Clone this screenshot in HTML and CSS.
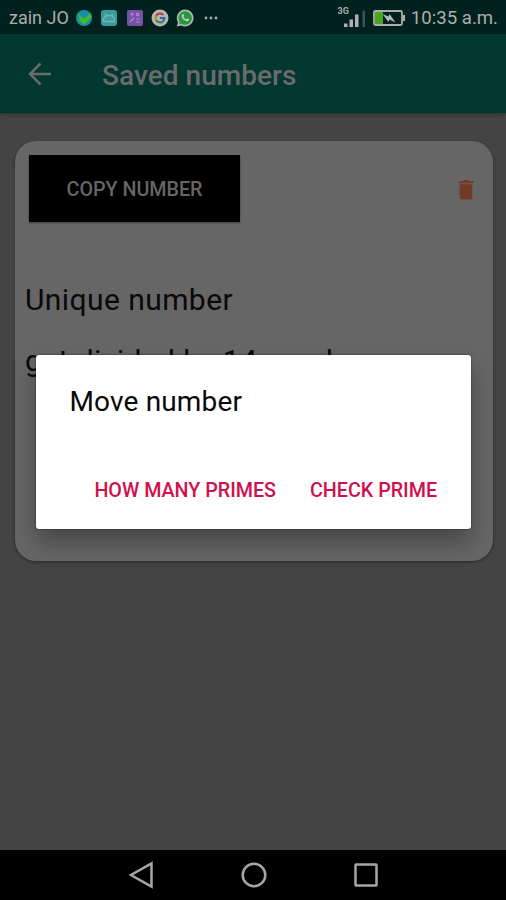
FILE: index.html
```
<!DOCTYPE html>
<html lang="en">
<head>
	<meta charset="UTF-8">
	<title>Saved numbers</title>
	<link rel="stylesheet" href="styles.css">
</head>
<body>

<div class="status-bar">
	<span class="carrier">zain JO</span>
	<div class="notifications">
		<svg width="18" height="18" viewBox="0 0 18 18">
			<circle cx="9" cy="9" r="8" fill="#168fa8"/>
			<path d="M2 4.500L7 8l2 1.500L16 4l.5 4-4.500 5-3.500 3-2.500-3.500L2 11l3-1z" fill="#43b82c"/>
		</svg>
		<svg width="18" height="18" viewBox="0 0 18 18">
			<rect x="1" y="1" width="16" height="16" rx="3" fill="#359c9e"/>
			<path d="M3.500 12.500V11a5.500 4.500 0 0 1 11 0v1.500zM5 5l2 2.500M13 5l-2 2.500" fill="none" stroke="#76b9b8" stroke-width="1.300"/>
			<path d="M6.500 10h1M10.500 10h1" stroke="#76b9b8"/>
		</svg>
		<svg width="18" height="18" viewBox="0 0 18 18">
			<rect x="1" y="1" width="16" height="16" rx="2" fill="#7950a8"/>
			<path d="M4 5h4M6 3.500v4M10 4l3 3M13 4l-3 3M4 13l4-4M10 10h4M10 13h4" fill="none" stroke="#a98bc6" stroke-width="1.200"/>
		</svg>
		<svg width="18" height="18" viewBox="0 0 18 18">
			<circle cx="9" cy="9" r="8.500" fill="#b4b4b4"/>
			<g fill="none" stroke-width="2">
				<path d="M5.200 6.700A4.400 4.400 0 0 1 12.200 6" stroke="#b53a30"/>
				<path d="M5.200 6.700a4.400 4.400 0 0 0 0 4.600" stroke="#b58a16"/>
				<path d="M5.200 11.300a4.400 4.400 0 0 0 6.800.9" stroke="#2c8445"/>
				<path d="M12 12.200A4.400 4.400 0 0 0 13.400 9H9" stroke="#3565ae"/>
			</g>
		</svg>
		<svg width="18" height="18" viewBox="0 0 18 18">
			<path d="M9 .500a8.500 8.500 0 1 1-4 16L.700 17.500 2 13.400A8.500 8.500 0 0 1 9 .500z" fill="#b4b4b4"/>
			<path d="M9 2.200a6.800 6.800 0 1 1-3.700 12.500L3 15.200l.800-2.300A6.800 6.800 0 0 1 9 2.200z" fill="#229a38"/>
			<path d="M6.300 5.200c.900-.800 1.300 0 1.700 1.300.200.600-.800 1-.500 1.500.600 1 1.400 1.700 2.500 2.200.600.200.900-1 1.400-.900 1.500.600 2.200.900 1.500 2-1 1.500-3.300.900-4.900-.300C6.400 9.700 4.400 7 6.300 5.200z" fill="#c4c4c4"/>
		</svg>
	</div>
	<svg class="more" width="14" height="4" viewBox="0 0 14 4">
		<g fill="#aaa"><circle cx="2" cy="2" r="1.400"/><circle cx="7" cy="2" r="1.400"/><circle cx="12" cy="2" r="1.400"/></g>
	</svg>

	<div class="signal">
		<span class="network">3G</span>
		<svg width="22" height="18" viewBox="0 0 22 18">
			<path d="M0 13.500h3.500V17H0zM5.500 9.500H9V17H5.500zM11 4.500h3.500V17H11z" fill="#b0b0b0"/>
			<path d="M18.500 .500H21V17h-2.500z" fill="#3c5551"/>
		</svg>
	</div>
	<svg class="battery" width="34" height="18" viewBox="0 0 34 18">
		<rect x="2" y="2" width="28" height="14" rx="1.500" fill="none" stroke="#adadad" stroke-width="1.800"/>
		<path d="M31 6h2v6h-2z" fill="#adadad"/>
		<path d="M3 3h8v12H3z" fill="#4ca51c"/>
		<path d="M10.500 5l6 2.500 1-2.500 6 8.500-6-3-1 2.500z" fill="#b8b8b8"/>
	</svg>
	<span class="clock">10:35 a.m.</span>
</div>

<header class="toolbar">
	<svg class="back" width="24" height="24" viewBox="0 0 24 24">
		<path d="M23 12H2M12.500 1.500L2 12l10.500 10.500" fill="none" stroke="#6b6b6b" stroke-width="2.500"/>
	</svg>
	<h1>Saved numbers</h1>
</header>

<main>
	<div class="card">
		<div class="card-head">
			<button class="copy">COPY NUMBER</button>
			<svg class="trash" width="16" height="20" viewBox="0 0 16 20">
				<path d="M.500 1.200h4.300L5.800 0h4.400l1 1.200h4.300v2H.500zM1.700 4.200h12.600v13.300q0 2-2 2H3.700q-2 0-2-2z" fill="#713a24"/>
			</svg>
		</div>
		<p class="entry">Unique number</p>
		<p class="entry entry-detail">get divided by 14 number</p>
	</div>
</main>

<nav class="nav-bar">
	<svg width="28" height="28" viewBox="0 0 28 28"><path d="M24.500 2.500v23L4 14z"/></svg>
	<svg width="28" height="28" viewBox="0 0 28 28"><circle cx="14" cy="14" r="11.300"/></svg>
	<svg width="28" height="28" viewBox="0 0 28 28"><rect x="3.500" y="3.500" width="21" height="21" rx=".500"/></svg>
</nav>

<div class="dialog">
	<h2>Move number</h2>
	<div class="dialog-actions">
		<button class="primes">HOW MANY PRIMES</button>
		<button class="check">CHECK PRIME</button>
	</div>
</div>

</body>
</html>
```
FILE: styles.css
```
html {
	height: 100%;
	font-family: Roboto, "Noto Sans", sans-serif;
}

body {
	position: relative;
	display: flex;
	flex-direction: column;
	height: 100%;
	margin: 0;
	overflow: hidden;
	background: #444;
}

/* reset */
h1, h2, p, button {
	margin: 0;
	padding: 0;
	font-weight: 400;
	line-height: 1;
	white-space: nowrap;
}

button {
	border: 0;
	background: none;
	font-family: inherit;
	font-weight: 500;
}

svg {
	display: block;
	flex: none;
}

/* status bar */
.status-bar {
	display: flex;
	align-items: center;
	box-sizing: border-box;
	height: 34px;
	padding: 1px 8px 0 9px;
	background: #00211d;
	color: #adadad;
	font-size: 18.6px;
	white-space: nowrap;
}

.carrier {
	width: 66px;
	font-size: 18px;
}

.notifications {
	display: flex;
	gap: 7.3px;
}

.more {
	margin-left: 10px;
}

.signal {
	display: flex;
	align-items: flex-end;
	height: 20px;
	margin-left: auto;
}

.network {
	align-self: flex-start;
	margin: -1px -5px 0 0;
	font-size: 9px;
	font-weight: 700;
	line-height: 1;
}

.battery {
	margin: 0 5px 0 6px;
}

/* toolbar */
.toolbar {
	display: flex;
	flex: none;
	align-items: center;
	height: 79px;
	padding-left: 28px;
	background: #00372f;
	box-shadow: 0 1px 4px rgba(0, 0, 0, .35);
}

h1 {
	margin: 4px 0 0 50px;
	color: #6b6b6b;
	font-size: 28px;
	font-weight: 500;
	letter-spacing: .05px;
}

/* content */
main {
	flex: 1;
	padding: 28px 13px 0 14.5px;
}

.card {
	box-sizing: border-box;
	height: 420px;
	padding: 14px 19px 0 10.5px;
	border-radius: 21px;
	background: #666;
	box-shadow: 0 1px 3px rgba(0, 0, 0, .4);
}

.card-head {
	display: flex;
	align-items: center;
	justify-content: space-between;
	padding-left: 3.5px;
}

.copy {
	width: 211px;
	height: 67px;
	padding: 3px 0 0 1px;
	background: #000;
	box-shadow: 0 1px 2px rgba(0, 0, 0, .4);
	color: #666;
	font-size: 19.7px;
}

.trash {
	margin-top: 3px;
}

.entry {
	margin-top: 63px;
	color: #0a0a0a;
	font-size: 30px;
	letter-spacing: .42px;
}

.entry-detail {
	margin-top: 31px;
}

/* navigation */
.nav-bar {
	display: flex;
	flex: none;
	justify-content: center;
	gap: 84.5px;
	height: 39px;
	padding: 11px 0 0 1px;
	background: #000;
	fill: none;
	stroke: #a6a6a6;
	stroke-width: 2.500;
}

/* dialog over the page */
.dialog {
	position: absolute;
	top: 355px;
	left: 35.5px;
	box-sizing: border-box;
	width: 435.5px;
	height: 174px;
	padding: 33px 34px 0 34px;
	border-radius: 3px;
	background: #fff;
	box-shadow: 0 0 2px rgba(0, 0, 0, .6), 0 14px 24px rgba(0, 0, 0, .3);
}

h2 {
	color: #0a0a0a;
	font-size: 28px;
	letter-spacing: .15px;
}

.dialog-actions {
	display: flex;
	justify-content: flex-end;
	gap: 34px;
	margin-top: 65px;
}

.dialog-actions button {
	color: #d0104c;
	font-size: 19.7px;
}
```
